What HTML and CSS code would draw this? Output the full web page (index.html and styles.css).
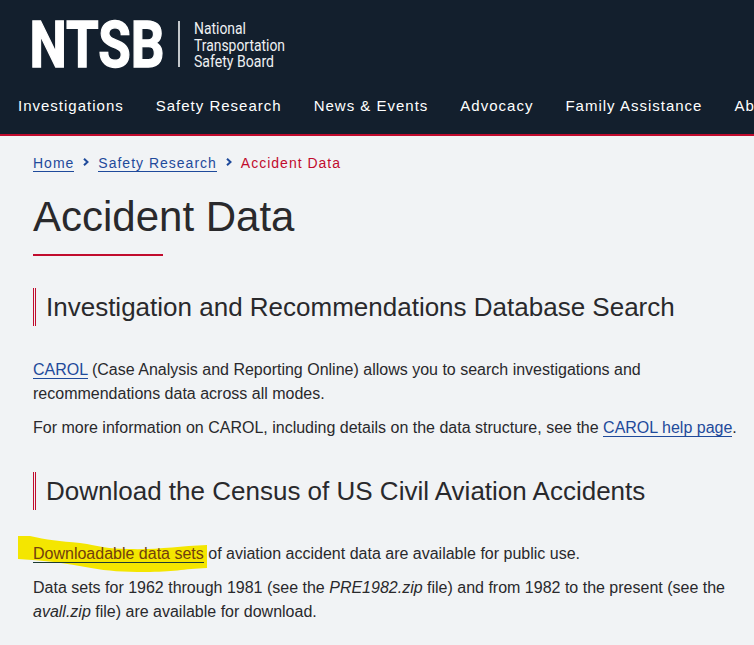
FILE: index.html
```
<!DOCTYPE html>
<html lang="en">
<head>
<meta charset="utf-8">
<title>Accident Data</title>
<link rel="stylesheet" href="styles.css">
</head>
<body>
<header class="site-header">
  <svg class="logo" width="270" height="60" viewBox="0 0 270 60" role="img">
    <text class="logo-mark" x="-2.500" y="53" textLength="135" lengthAdjust="spacingAndGlyphs">NTSB</text>
    <rect class="logo-rule" x="146" y="7" width="2" height="46"/>
    <g class="logo-name">
      <text x="162" y="20" textLength="52" lengthAdjust="spacingAndGlyphs">National</text>
      <text x="162" y="36.500" textLength="91" lengthAdjust="spacingAndGlyphs">Transportation</text>
      <text x="162" y="53" textLength="80" lengthAdjust="spacingAndGlyphs">Safety Board</text>
    </g>
  </svg>
  <nav class="main-nav">
    <a>Investigations</a><a>Safety Research</a><a>News &amp; Events</a><a>Advocacy</a><a>Family Assistance</a><a>About</a>
  </nav>
</header>
<main class="content">
  <nav class="breadcrumb">
    <a class="link">Home</a>
    <svg class="chevron" width="6" height="8" viewBox="0 0 6 8"><path d="M1 .7 4.500 4 1 7.300"/></svg>
    <a class="link">Safety Research</a>
    <svg class="chevron" width="6" height="8" viewBox="0 0 6 8"><path d="M1 .7 4.500 4 1 7.300"/></svg>
    <span class="current">Accident Data</span>
  </nav>
  <h1>Accident Data</h1>
  <section>
    <h2>Investigation and Recommendations Database Search</h2>
    <p><a class="link">CAROL</a> (Case Analysis and Reporting Online) allows you to search investigations and recommendations data across all modes.</p>
    <p>For more information on CAROL, including details on the data structure, see the <a class="link">CAROL help page</a>.</p>
  </section>
  <section>
    <h2>Download the Census of US Civil Aviation Accidents</h2>
    <p><span class="marked"><svg class="marker" width="190" height="38" viewBox="0 0 190 38"><path d="M0 1H12C28 5 42 6 62 8C82 11 90 14 110 14C140 15 160 11 189 10V33C165 34 155 37 127 37C105 37 90 36 73 33C48 28 24 25 0 24Z"/></svg><a class="link marked-link">Downloadable data sets</a></span> of aviation accident data are available for public use.</p>
    <p>Data sets for 1962 through 1981 (see the <em>PRE1982.zip</em> file) and from 1982 to the present (see the <em>avall.zip</em> file) are available for download.</p>
  </section>
</main>
</body>
</html>
```
FILE: styles.css
```
body {
  margin: 0;
  background: #f1f3f5;
  color: #29292c;
  font: 16px/24px "Liberation Sans", Arial, sans-serif;
  overflow: hidden;
}
.site-header {
  box-sizing: border-box;
  height: 136px;
  padding-top: 14px;
  background: #131f2d;
  border-bottom: 2px solid #c10b2d;
}
.logo {
  display: block;
  margin-left: 32px;
  overflow: visible;
  font-family: Roboto, sans-serif;
  fill: #fff;
}
.logo-mark {
  font-size: 64px;
  font-weight: 700;
  stroke: #fff;
  stroke-width: 1.3px;
}
.logo-name { font-size: 17px; fill: #eef0f2; }
.logo-rule { fill: #c3c7cb; }
.main-nav {
  display: flex;
  gap: 32px;
  margin: 20px 0 0 18px;
  color: #fff;
  font-size: 15px;
  letter-spacing: 1px;
  white-space: nowrap;
}
.content { padding: 16px 15px 0 33px; }
.breadcrumb {
  display: flex;
  align-items: center;
  height: 22px;
  font-size: 14px;
  line-height: 16px;
  letter-spacing: 1px;
}
.link {
  color: #1f4a9b;
  border-bottom: 1px solid #1f4a9b;
}
.chevron { margin: 0 9px 2px; overflow: visible; }
.chevron path { fill: none; stroke: #1f4a9b; stroke-width: 2; }
.current { color: #c10b2d; }
h1 {
  margin: 18px 0 0;
  font-size: 42px;
  line-height: 50px;
  font-weight: 400;
}
h1::after {
  content: "";
  display: block;
  width: 130px;
  height: 2px;
  margin-top: 12px;
  background: #c10b2d;
}
h2 {
  margin: 32px 0 32px;
  padding-left: 10px;
  border-left: 3px double #c10b2d;
  font-size: 26px;
  line-height: 38px;
  font-weight: 400;
}
p { margin: 0 0 10px; }
.marked { position: relative; }
.marker {
  position: absolute;
  left: -15px;
  top: -10px;
  fill: #f4e600;
}
.marked-link {
  position: relative;
  color: #71400d;
  border-color: #1c3a34;
}
```
